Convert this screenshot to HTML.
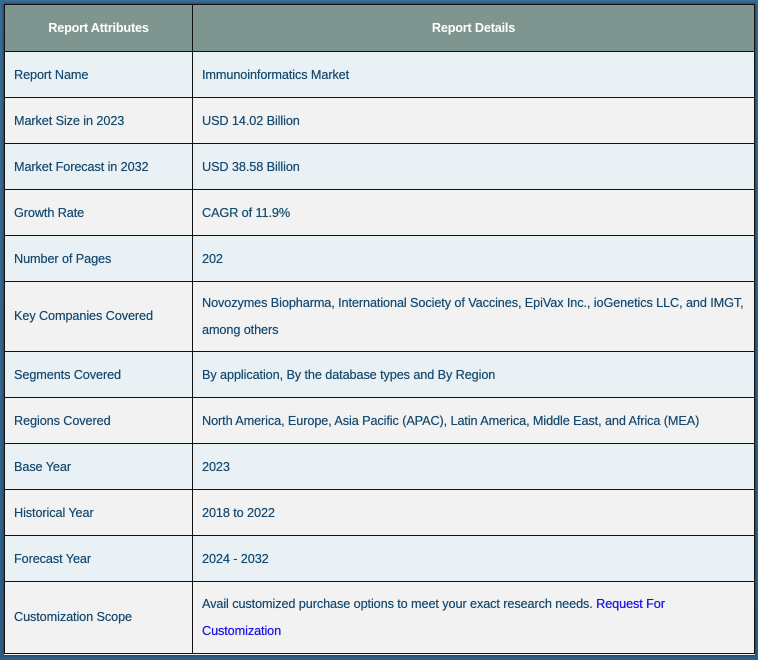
<!DOCTYPE html>
<html><head><style>
html,body{margin:0;padding:0;}
body{width:758px;height:660px;background:linear-gradient(#3b6d93,#2f5f86);position:relative;overflow:hidden;font-family:"Liberation Sans",Arial,sans-serif;}
.wrap{position:absolute;left:4px;top:4px;width:751px;height:651px;background:#f2f2f2;box-shadow:0 0 2px 1px #1e4668;}
table{border-collapse:collapse;width:751px;table-layout:fixed;}
td,th{border:1.5px solid #111;font-size:12.7px;color:#164a70;padding:0 9px;text-align:left;vertical-align:middle;}
th{background:#7f9690;color:#fff;font-weight:bold;text-align:center;height:46px;letter-spacing:-0.2px;}
td{height:45px;letter-spacing:-0.1px;text-shadow:0 0 0.4px #164a70;}
tr.a td{background:#e9f1f4;}
tr.b td{background:#f2f2f2;}
tr.t td{height:69px;line-height:27px;}
tr.t2 td{height:71px;line-height:27px;}
a{color:#1a12e8;text-decoration:none;text-shadow:0 0 0.4px #1a12e8;}
</style></head><body><div class="wrap">
<table>
<colgroup><col style="width:188px"><col></colgroup>
<tr><th>Report Attributes</th><th>Report Details</th></tr>
<tr class="a"><td>Report Name</td><td>Immunoinformatics Market</td></tr>
<tr class="b"><td>Market Size in 2023</td><td>USD 14.02 Billion</td></tr>
<tr class="a"><td>Market Forecast in 2032</td><td>USD 38.58 Billion</td></tr>
<tr class="b"><td>Growth Rate</td><td>CAGR of 11.9%</td></tr>
<tr class="a"><td>Number of Pages</td><td>202</td></tr>
<tr class="b t"><td>Key Companies Covered</td><td>Novozymes Biopharma, International Society of Vaccines, EpiVax Inc., ioGenetics LLC, and IMGT,<br>among others</td></tr>
<tr class="a"><td>Segments Covered</td><td>By application, By the database types and By Region</td></tr>
<tr class="b"><td>Regions Covered</td><td>North America, Europe, Asia Pacific (APAC), Latin America, Middle East, and Africa (MEA)</td></tr>
<tr class="a"><td>Base Year</td><td>2023</td></tr>
<tr class="b"><td>Historical Year</td><td>2018 to 2022</td></tr>
<tr class="a"><td>Forecast Year</td><td>2024 - 2032</td></tr>
<tr class="b t2"><td>Customization Scope</td><td>Avail customized purchase options to meet your exact research needs. <a>Request For<br>Customization</a></td></tr>
</table></div></body></html>
